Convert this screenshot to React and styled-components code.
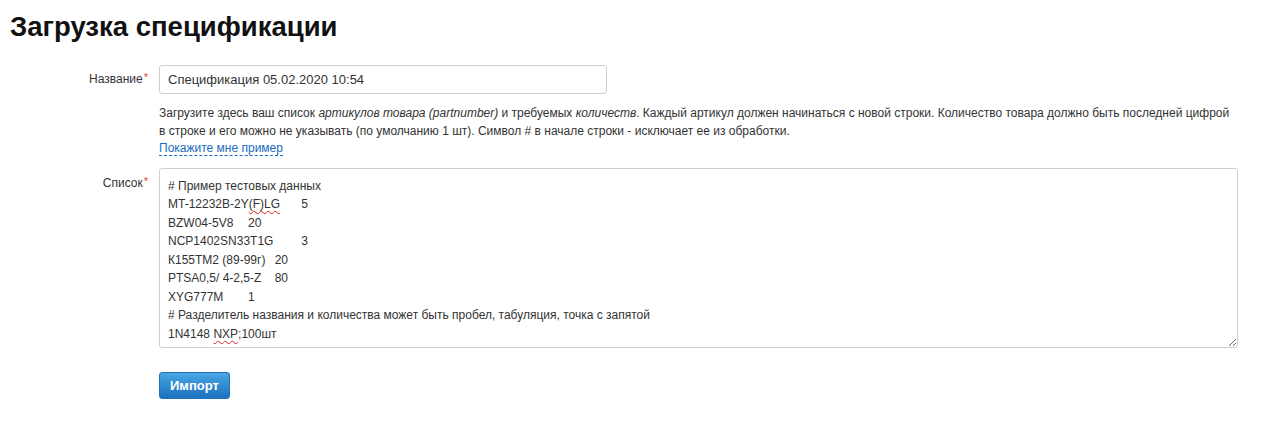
import styled, { createGlobalStyle } from "styled-components";

const Global = createGlobalStyle`
  body {
    margin: 0;
    background: #fff;
    font-family: "Liberation Sans", Arial, sans-serif;
    color: #333;
  }
`;

const Page = styled.div`
  padding: 11px 10px 20px;
`;

const Title = styled.h1`
  margin: 0 0 22px;
  font-size: 27.5px;
  line-height: 32px;
  font-weight: bold;
  color: #111;
`;

const Form = styled.div`
  display: grid;
  grid-template-columns: 138px 1079px;
  column-gap: 11px;
`;

const Label = styled.label`
  text-align: right;
  font-size: 12px;
  line-height: 18px;
  padding-top: ${(p) => p.$top || 5}px;
  color: #333;
`;

const Req = styled.span`
  color: #e0403a;
  font-size: 11px;
  vertical-align: top;
  margin-left: 1px;
  position: relative;
  top: -2px;
`;

const Field = styled.div`
  display: flex;
  flex-direction: column;
  align-items: flex-start;
`;

const Input = styled.input`
  box-sizing: border-box;
  width: 448px;
  height: 29px;
  padding: 0 8px;
  border: 1px solid #cfcfcf;
  border-radius: 3px;
  font-family: "Liberation Sans", Arial, sans-serif;
  font-size: 13px;
  color: #333;
  outline: none;
`;

const Help = styled.div`
  margin: 11px 0 10px;
  font-size: 12px;
  line-height: 17.5px;
  color: #333;
  white-space: nowrap;
`;

const Link = styled.a`
  color: #1a6bc2;
  text-decoration: none;
  border-bottom: 1px dashed #1a6bc2;
`;

const Area = styled.div`
  box-sizing: border-box;
  width: 1079px;
  height: 180px;
  padding: 8px;
  border: 1px solid #cfcfcf;
  border-radius: 3px;
  font-size: 12px;
  line-height: 18.5px;
  color: #333;
  white-space: pre;
  tab-size: 8;
  overflow: auto;
  resize: vertical;
`;

const Typo = styled.span`
  text-decoration: underline wavy #e02020;
  text-decoration-thickness: 1px;
  text-underline-offset: 2px;
`;

const Actions = styled.div`
  grid-column: 2;
  padding-top: 24px;
`;

const Button = styled.button`
  height: 27px;
  padding: 0 10px;
  border: 1px solid #1f73bb;
  border-radius: 3px;
  background: linear-gradient(to bottom, #47a7e3, #1d70bd);
  color: #fff;
  font-family: "Liberation Sans", Arial, sans-serif;
  font-size: 13px;
  font-weight: bold;
  cursor: pointer;
`;

export default function App() {
  return (
    <Page>
      <Global />
      <Title>Загрузка спецификации</Title>
      <Form>
        <Label>
          Название<Req>*</Req>
        </Label>
        <Field>
          <Input defaultValue="Спецификация 05.02.2020 10:54" />
          <Help>
            Загрузите здесь ваш список <i>артикулов товара (partnumber)</i> и
            требуемых <i>количеств</i>. Каждый артикул должен начинаться с новой
            строки. Количество товара должно быть последней цифрой
            <br />в строке и его можно не указывать (по умолчанию 1 шт). Символ
            # в начале строки - исключает ее из обработки.
            <br />
            <Link href="#">Покажите мне пример</Link>
          </Help>
        </Field>
        <Label $top={6}>
          Список<Req>*</Req>
        </Label>
        <Area>
          {"# Пример тестовых данных\nMT-12232B-2Y"}
          <Typo>(F)LG</Typo>
          {"\t5\nBZW04-5V8\t20\nNCP1402SN33T1G\t3\nК155ТМ2 (89-99г)\t20\nPTSA0,5/ 4-2,5-Z\t80\nXYG777M\t1\n# Разделитель названия и количества может быть пробел, табуляция, точка с запятой\n1N4148 "}
          <Typo>NXP</Typo>
          {";100шт"}
        </Area>
        <Actions>
          <Button>Импорт</Button>
        </Actions>
      </Form>
    </Page>
  );
}
